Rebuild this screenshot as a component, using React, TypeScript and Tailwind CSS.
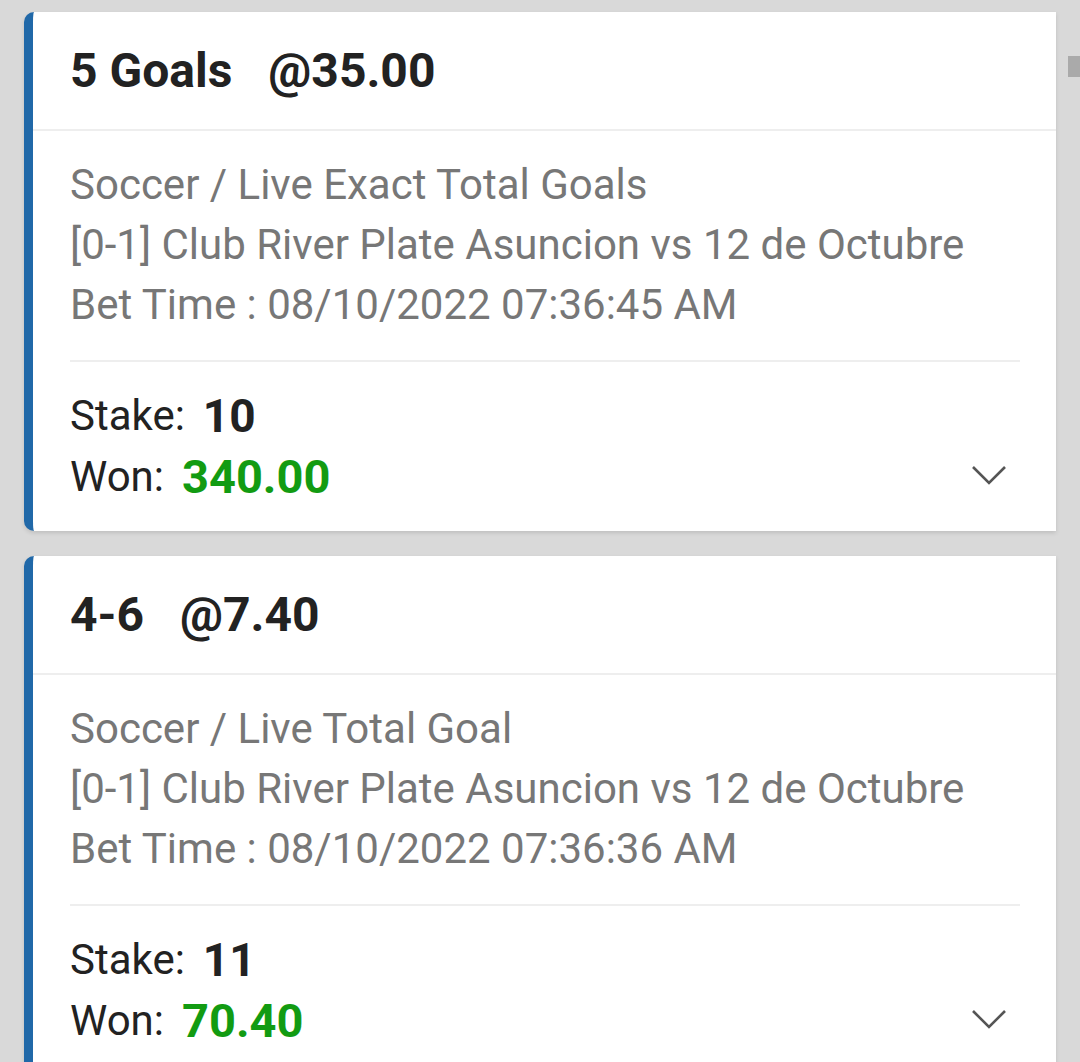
type Bet = {
  pick: string
  odds: string
  market: string
  match: string
  time: string
  stake: string
  won: string
}

const bets: Bet[] = [
  {
    pick: '5 Goals',
    odds: '@35.00',
    market: 'Soccer / Live Exact Total Goals',
    match: '[0-1] Club River Plate Asuncion vs 12 de Octubre',
    time: 'Bet Time : 08/10/2022 07:36:45 AM',
    stake: '10',
    won: '340.00',
  },
  {
    pick: '4-6',
    odds: '@7.40',
    market: 'Soccer / Live Total Goal',
    match: '[0-1] Club River Plate Asuncion vs 12 de Octubre',
    time: 'Bet Time : 08/10/2022 07:36:36 AM',
    stake: '11',
    won: '70.40',
  },
]

function Chevron() {
  return (
    <svg
      viewBox="0 0 36 20"
      className="mr-[13px] mb-[22px] h-[20px] w-[36px]"
      fill="none"
      stroke="#555555"
      strokeWidth={2.6}
    >
      <polyline points="2,2 18,18 34,2" />
    </svg>
  )
}

function BetCard({ bet }: { bet: Bet }) {
  return (
    <div className="overflow-hidden rounded-l-[10px] border-l-[9px] border-[#2068a8] bg-white shadow-[0_2px_4px_rgba(0,0,0,0.12)]">
      <div className="flex h-[117px] items-center gap-[36px] pl-[37px] text-[48px] font-bold text-[#222]">
        <span>{bet.pick}</span>
        <span>{bet.odds}</span>
      </div>
      <div className="h-[2px] bg-[#eeeeee]" />
      <div className="pl-[37px] pr-[36px] pt-[24px] pb-[24px]">
        <div className="text-[42px] leading-[60px] text-[#777]">
          <div>{bet.market}</div>
          <div>{bet.match}</div>
          <div>{bet.time}</div>
        </div>
        <div className="mt-[25px] mb-[23px] h-[2px] bg-[#eeeeee]" />
        <div className="flex items-end justify-between text-[42px] text-[#222]">
          <div>
            <div className="flex h-[61px] items-center">
              Stake:<span className="ml-[18px] text-[46px] leading-none font-bold">{bet.stake}</span>
            </div>
            <div className="flex h-[61px] items-center">
              Won:
              <span className="ml-[18px] text-[47px] leading-none font-bold text-[#129b12]">
                {bet.won}
              </span>
            </div>
          </div>
          <Chevron />
        </div>
      </div>
    </div>
  )
}

export default function App() {
  return (
    <div
      className="flex min-h-[1062px] bg-[#d9d9d9]"
      style={{ fontFamily: 'Roboto, "Noto Sans", sans-serif' }}
    >
      <div className="flex w-[1056px] flex-col gap-[25px] pt-[12px] pl-[24px]">
        {bets.map((bet) => (
          <BetCard key={bet.time} bet={bet} />
        ))}
      </div>
      <div className="flex w-[24px] justify-end">
        <div className="mt-[56px] h-[21px] w-[12px] bg-[#aaaaaa]" />
      </div>
    </div>
  )
}
